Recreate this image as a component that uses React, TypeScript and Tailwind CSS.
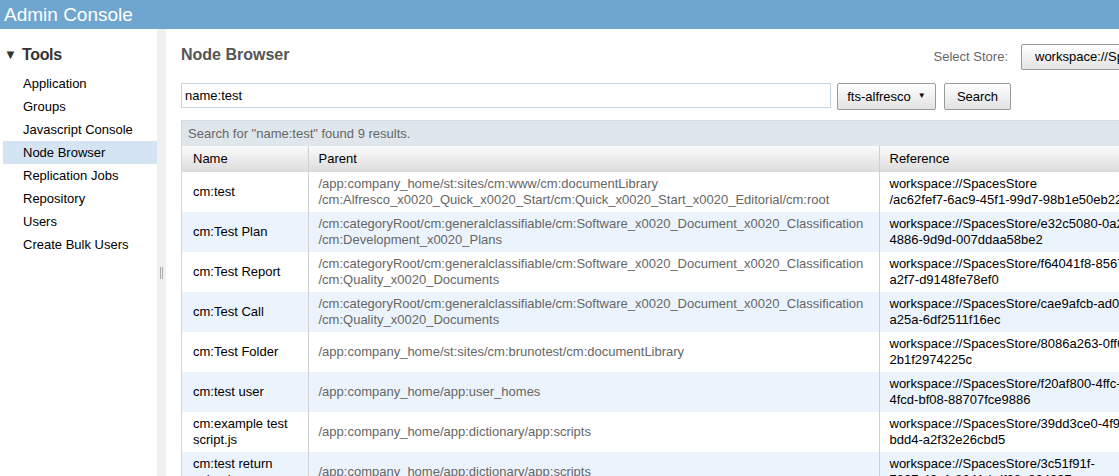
const navItems = [
  "Application",
  "Groups",
  "Javascript Console",
  "Node Browser",
  "Replication Jobs",
  "Repository",
  "Users",
  "Create Bulk Users",
]

const rows = [
  {
    name: "cm:test",
    parent: ["/app:company_home/st:sites/cm:www/cm:documentLibrary", "/cm:Alfresco_x0020_Quick_x0020_Start/cm:Quick_x0020_Start_x0020_Editorial/cm:root"],
    ref: ["workspace://SpacesStore", "/ac62fef7-6ac9-45f1-99d7-98b1e50eb22c"],
  },
  {
    name: "cm:Test Plan",
    parent: ["/cm:categoryRoot/cm:generalclassifiable/cm:Software_x0020_Document_x0020_Classification", "/cm:Development_x0020_Plans"],
    ref: ["workspace://SpacesStore/e32c5080-0a2f-", "4886-9d9d-007ddaa58be2"],
  },
  {
    name: "cm:Test Report",
    parent: ["/cm:categoryRoot/cm:generalclassifiable/cm:Software_x0020_Document_x0020_Classification", "/cm:Quality_x0020_Documents"],
    ref: ["workspace://SpacesStore/f64041f8-8567-", "a2f7-d9148fe78ef0"],
  },
  {
    name: "cm:Test Call",
    parent: ["/cm:categoryRoot/cm:generalclassifiable/cm:Software_x0020_Document_x0020_Classification", "/cm:Quality_x0020_Documents"],
    ref: ["workspace://SpacesStore/cae9afcb-ad0c-", "a25a-6df2511f16ec"],
  },
  {
    name: "cm:Test Folder",
    parent: ["/app:company_home/st:sites/cm:brunotest/cm:documentLibrary"],
    ref: ["workspace://SpacesStore/8086a263-0ff6-", "2b1f2974225c"],
  },
  {
    name: "cm:test user",
    parent: ["/app:company_home/app:user_homes"],
    ref: ["workspace://SpacesStore/f20af800-4ffc-", "4fcd-bf08-88707fce9886"],
  },
  {
    name: "cm:example test script.js",
    parent: ["/app:company_home/app:dictionary/app:scripts"],
    ref: ["workspace://SpacesStore/39dd3ce0-4f9a-", "bdd4-a2f32e26cbd5"],
  },
  {
    name: "cm:test return value.js",
    parent: ["/app:company_home/app:dictionary/app:scripts"],
    ref: ["workspace://SpacesStore/3c51f91f-", "7897-40c1-8641-bdf68e824997"],
  },
]

export default function App() {
  return (
    <div className="w-[1119px] h-[476px] overflow-hidden bg-white font-['Liberation_Sans',Arial,sans-serif] flex flex-col">
      <header className="h-[29px] shrink-0 bg-[#6fa6cf] flex items-center px-[4px]">
        <span className="text-white text-[19px] leading-none">Admin Console</span>
      </header>
      <div className="flex flex-1 min-h-0">
        <aside className="w-[157px] shrink-0 pt-[16px]">
          <div className="flex items-center gap-[5px] pl-[4px] h-[20px] text-[#333]">
            <span className="text-[13px]">▼</span>
            <span className="text-[16px] font-bold tracking-[-0.3px]">Tools</span>
          </div>
          <ul className="mt-[7px] pl-[3px]">
            {navItems.map((item) => (
              <li
                key={item}
                className={
                  "h-[23px] flex items-center pl-[20px] text-[13px] text-black " +
                  (item === "Node Browser" ? "bg-[#d4e4f2]" : "")
                }
              >
                {item}
              </li>
            ))}
          </ul>
        </aside>
        <div className="w-[9px] shrink-0 bg-[#f0f0f0] flex items-center justify-center">
          <div className="w-[3px] h-[12px] border-x border-[#aaa] mt-[40px]" />
        </div>
        <main className="flex-1 min-w-0 pl-[15px] pt-[16px] overflow-hidden">
          <div className="flex items-start justify-between h-[28px]">
            <h1 className="text-[16px] font-bold text-[#555] leading-[20px]">Node Browser</h1>
            <div className="flex items-center mt-[-1px]">
              <span className="text-[13px] text-[#666] mr-[13px]">Select Store:</span>
              <div className="w-[110px] h-[26px] border border-[#999] rounded-[2px] bg-gradient-to-b from-white to-[#e4e4e4] text-[13px] pl-[13px] flex items-center whitespace-nowrap overflow-hidden -mr-[12px]">
                workspace://SpacesStore
              </div>
            </div>
          </div>
          <div className="flex items-start mt-[10px] h-[37px]">
            <div className="w-[650px] h-[25px] border border-[#c6d6e3] flex items-center pl-[3px] text-[13px] text-black">
              name:test
            </div>
            <div className="ml-[6px] w-[99px] h-[27px] border border-[#999] rounded-[2px] bg-gradient-to-b from-white to-[#e2e2e2] flex items-center justify-center gap-[7px] text-[13px] font-normal">
              fts-alfresco
              <span className="text-[8px] mt-[-2px]">▼</span>
            </div>
            <div className="ml-[8px] w-[67px] h-[27px] border border-[#999] rounded-[2px] bg-gradient-to-b from-white to-[#e2e2e2] flex items-center justify-center text-[13px] font-normal">
              Search
            </div>
          </div>
          <div className="w-[960px] border-l border-[#cfd6dc]">
            <div className="h-[26px] bg-[#dfe6ec] border-t border-[#d4dbe1] flex items-center pl-[6px] text-[13px] text-[#666]">
              Search for "name:test" found 9 results.
            </div>
            <table className="table-fixed border-collapse w-[960px] text-[13px]">
              <colgroup>
                <col className="w-[126px]" />
                <col className="w-[571px]" />
                <col className="w-[263px]" />
              </colgroup>
              <thead>
                <tr className="h-[26px] bg-gradient-to-b from-[#fbfbfb] to-[#dcdcdc]">
                  <th className="text-left font-normal pl-[11px] border-r border-[#cfcfcf]">Name</th>
                  <th className="text-left font-normal pl-[10px] border-r border-[#cfcfcf]">Parent</th>
                  <th className="text-left font-normal pl-[10px]">Reference</th>
                </tr>
              </thead>
              <tbody>
                {rows.map((r, i) => (
                  <tr key={r.name} className={"h-[40px] " + (i % 2 === 1 ? "bg-[#ebf4fd]" : "bg-white")}>
                    <td className="pl-[11px] pr-[4px] leading-[16px] text-black align-middle border-r border-[#d0d0d0]">{r.name}</td>
                    <td className="pl-[10px] leading-[16px] text-[#666] align-middle border-r border-[#d0d0d0] whitespace-nowrap">
                      {r.parent.map((p) => (
                        <div key={p}>{p}</div>
                      ))}
                    </td>
                    <td className="pl-[10px] leading-[16px] text-black align-middle whitespace-nowrap">
                      {r.ref.map((p) => (
                        <div key={p}>{p}</div>
                      ))}
                    </td>
                  </tr>
                ))}
              </tbody>
            </table>
          </div>
        </main>
      </div>
    </div>
  )
}
